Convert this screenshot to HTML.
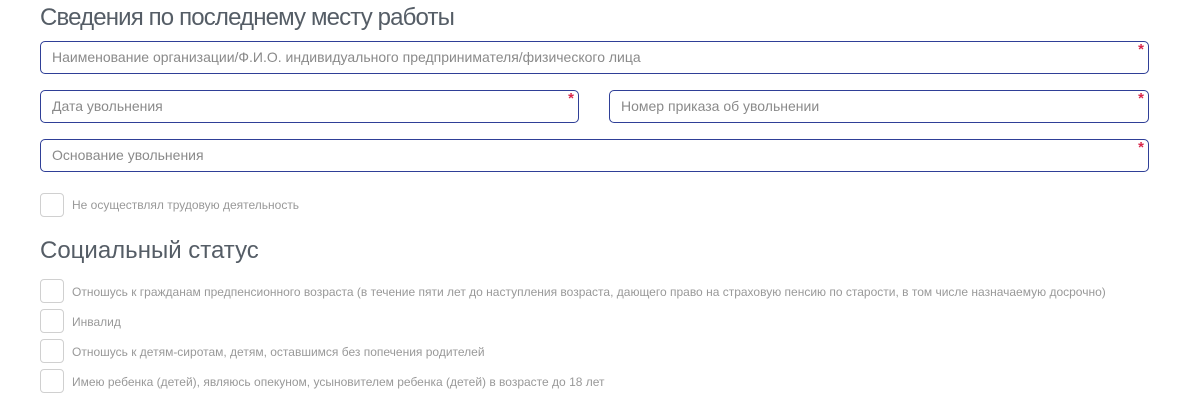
<!DOCTYPE html>
<html><head><meta charset="utf-8"><style>
body{margin:0;width:1181px;height:402px;background:#fff;font-family:"Liberation Sans",sans-serif;position:relative;overflow:hidden}
.h{position:absolute;left:40px;font-size:24px;color:#555d66;margin:0;font-weight:normal;line-height:28px}
.in{position:absolute;box-sizing:border-box;border:1.5px solid #2f3f97;border-radius:5px;height:33px;font-size:14px;color:#8a8a8a;padding-left:11px;line-height:30px}
.in:after{content:"*";position:absolute;right:4px;top:1px;color:#d8284a;font-size:15px;font-weight:bold;line-height:14px}
.cb{position:absolute;left:40px;width:22px;height:22px;border:1px solid #d0d0d0;border-radius:4px}
.t{position:absolute;left:72px;font-size:12px;color:#999;line-height:14px}
</style></head><body>
<h1 class="h" style="top:4px;letter-spacing:-0.85px">Сведения по последнему месту работы</h1>
<div class="in" style="left:40px;top:41px;width:1109px">Наименование организации/Ф.И.О. индивидуального предпринимателя/физического лица</div>
<div class="in" style="left:40px;top:90px;width:539px">Дата увольнения</div>
<div class="in" style="left:609px;top:90px;width:540px">Номер приказа об увольнении</div>
<div class="in" style="left:40px;top:139px;width:1109px">Основание увольнения</div>
<div class="cb" style="top:193px"></div><div class="t" style="top:198px">Не осуществлял трудовую деятельность</div>
<h1 class="h" style="top:237px">Социальный статус</h1>
<div class="cb" style="top:279px"></div><div class="t" style="top:285px">Отношусь к гражданам предпенсионного возраста (в течение пяти лет до наступления возраста, дающего право на страховую пенсию по старости, в том числе назначаемую досрочно)</div>
<div class="cb" style="top:309px"></div><div class="t" style="top:315px">Инвалид</div>
<div class="cb" style="top:339px"></div><div class="t" style="top:345px">Отношусь к детям-сиротам, детям, оставшимся без попечения родителей</div>
<div class="cb" style="top:369px"></div><div class="t" style="top:375px">Имею ребенка (детей), являюсь опекуном, усыновителем ребенка (детей) в возрасте до 18 лет</div>
</body></html>
